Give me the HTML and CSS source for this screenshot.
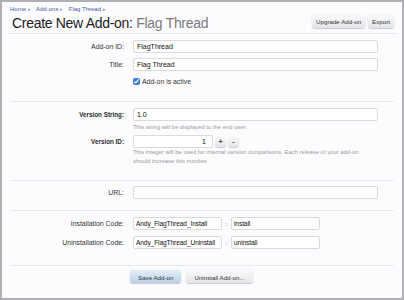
FILE: index.html
```html
<!DOCTYPE html>
<html lang="en">
<head>
  <meta charset="UTF-8" />
  <meta name="viewport" content="width=device-width, initial-scale=1.0"/>
  <title>Create New Add-on</title>
  <link rel="stylesheet" href="styles.css">
</head>
<body>
  <div class="page">
    <div class="breadcrumb">
      <a href="#">Home</a> <span class="arrow">&#9656;</span>
      <a href="#">Add-ons</a> <span class="arrow">&#9656;</span>
      <a href="#">Flag Thread</a> <span class="arrow">&#9656;</span>
    </div>

    <div class="title-bar">
      <h1>Create New Add-on: <span class="title-sub">Flag Thread</span></h1>
      <div class="top-ctrls">
        <a href="#" class="btn">Upgrade Add-on</a>
        <a href="#" class="btn">Export</a>
      </div>
    </div>

    <form class="addon-form">
      <div class="section section-main">
        <div class="row">
          <span class="row-label">Add-on ID:</span>
          <div class="text-input" contenteditable="true">FlagThread</div>
        </div>
        <div class="row">
          <span class="row-label">Title:</span>
          <div class="text-input" contenteditable="true">Flag Thread</div>
        </div>
        <div class="row row-check">
          <span class="row-label"></span>
          <label class="check-label"><input type="checkbox" checked /> Add-on is active</label>
        </div>
      </div>

      <div class="section section-version">
        <div class="row">
          <span class="row-label bold">Version String:</span>
          <div class="text-input" contenteditable="true">1.0</div>
        </div>
        <p class="hint">This string will be displayed to the end user.</p>
        <div class="row row-spaced">
          <span class="row-label bold">Version ID:</span>
          <div class="text-input num-input" contenteditable="true">1</div>
          <button type="button" class="spin">+</button>
          <button type="button" class="spin">-</button>
        </div>
        <p class="hint hint-tight">This integer will be used for internal version comparisons. Each release of your add-on should increase this number.</p>
      </div>

      <div class="section section-url">
        <div class="row">
          <span class="row-label">URL:</span>
          <div class="text-input" contenteditable="true"></div>
        </div>
      </div>

      <div class="section section-code">
        <div class="row">
          <span class="row-label">Installation Code:</span>
          <div class="text-input code-input" contenteditable="true">Andy_FlagThread_Install</div>
          <span class="sep">::</span>
          <div class="text-input code-input" contenteditable="true">install</div>
        </div>
        <div class="row row-spaced">
          <span class="row-label">Uninstallation Code:</span>
          <div class="text-input code-input" contenteditable="true">Andy_FlagThread_Uninstall</div>
          <span class="sep">::</span>
          <div class="text-input code-input" contenteditable="true">uninstall</div>
        </div>
      </div>

      <div class="submit-unit">
        <button type="submit" class="btn btn-primary">Save Add-on</button>
        <button type="button" class="btn">Uninstall Add-on...</button>
      </div>
    </form>
  </div>
</body>
</html>
```

FILE: styles.css
```css
* {
  margin: 0;
  padding: 0;
  box-sizing: border-box;
  font-family: 'Liberation Sans', Arial, sans-serif;
}

body {
  background-color: #aeb0b4;
  width: 404px;
  height: 300px;
  overflow: hidden;
}

.page {
  margin: 2px 2px 0 2px;
  height: 296px;
  background-color: #fcfcff;
  padding: 0 6px;
}

.breadcrumb {
  padding: 4px 0 0 2px;
  height: 12px;
  font-size: 6px;
  line-height: 7px;
  color: #4a6aa8;
}

.breadcrumb a {
  color: #3c5e9e;
  text-decoration: none;
}

.breadcrumb .arrow {
  font-size: 4.5px;
  color: #8a98b0;
  margin-right: 4px;
}

.title-bar {
  display: flex;
  justify-content: space-between;
  align-items: center;
  height: 20px;
  padding: 0 2px 0 4px;
  border-bottom: 1px solid #e4e8ef;
}

.title-bar h1 {
  font-size: 14px;
  font-weight: normal;
  letter-spacing: -0.3px;
  color: #202020;
  line-height: 16px;
  margin-top: -2px;
}

.title-sub {
  color: #7a7a7a;
}

.top-ctrls {
  display: flex;
  gap: 3px;
  margin-top: -4px;
}

.btn {
  display: inline-block;
  font-size: 6.2px;
  line-height: 11px;
  height: 13px;
  padding: 1px 4px 0;
  color: #333;
  text-decoration: none;
  border: none;
  border-radius: 3px;
  background: linear-gradient(#fafafa, #e4e5e8);
  box-shadow: 0 1px 1px rgba(0, 0, 0, 0.18), 0 0 0 0.5px rgba(0, 0, 0, 0.06);
  cursor: pointer;
}

.btn-primary {
  background: linear-gradient(#e4eff8, #b9d0e6);
}

.section {
  margin: 0 2px;
  border-bottom: 1px solid #e4e8ef;
}

.row {
  display: flex;
  align-items: center;
  height: 13px;
}

.row-label {
  width: 123px;
  flex: none;
  text-align: right;
  padding-right: 9px;
  font-size: 6.9px;
  color: #333;
}

.row-label.bold {
  font-weight: bold;
  color: #2a2a2a;
  font-size: 6.3px;
}

.text-input {
  flex: none;
  width: 245px;
  height: 13px;
  border: 1px solid #d8dade;
  border-radius: 2px;
  background: #fff;
  padding: 0 3px;
  font-size: 7px;
  line-height: 11px;
  color: #111;
  white-space: nowrap;
  overflow: hidden;
  outline: none;
}

.num-input {
  width: 80px;
  text-align: right;
  padding-right: 6px;
}

.code-input {
  width: 89px;
  padding: 0 2px;
  font-size: 6.6px;
  letter-spacing: -0.1px;
}

.sep {
  width: 9px;
  text-align: center;
  font-size: 6px;
  color: #666;
}

.spin {
  width: 11px;
  height: 11px;
  margin-left: 2px;
  border: none;
  border-radius: 3px;
  background: linear-gradient(#fafafa, #e2e3e6);
  box-shadow: 0 1px 1px rgba(0, 0, 0, 0.18);
  font-size: 7px;
  font-weight: bold;
  color: #444;
  line-height: 11px;
}

.hint {
  margin: 2px 0 0 123px;
  padding-right: 30px;
  font-size: 5.9px;
  line-height: 9px;
  color: #9a9a9a;
}

.hint-tight {
  margin-top: 0;
}

.section-main {
  padding: 6px 0 15px;
}

.section-main .row + .row {
  margin-top: 5px;
}

.section-main .row-check {
  margin-top: 7px;
  height: 10px;
}

.check-label {
  display: flex;
  align-items: center;
  gap: 2px;
  font-size: 6.9px;
  color: #333;
}

.check-label input {
  width: 7px;
  height: 7px;
  accent-color: #3b7dd8;
}

.section-version {
  padding: 6px 0 14px;
}

.row-spaced {
  margin-top: 3px;
}

.section-url {
  padding: 5px 0 11px;
}

.section-code {
  padding: 6px 0 16px;
}

.section-code .row-spaced {
  margin-top: 6px;
}

.submit-unit {
  display: flex;
  gap: 5px;
  padding: 4px 0 0 122px;
}

.submit-unit .btn {
  height: 13px;
  padding: 1px 8px 0;
}
```
